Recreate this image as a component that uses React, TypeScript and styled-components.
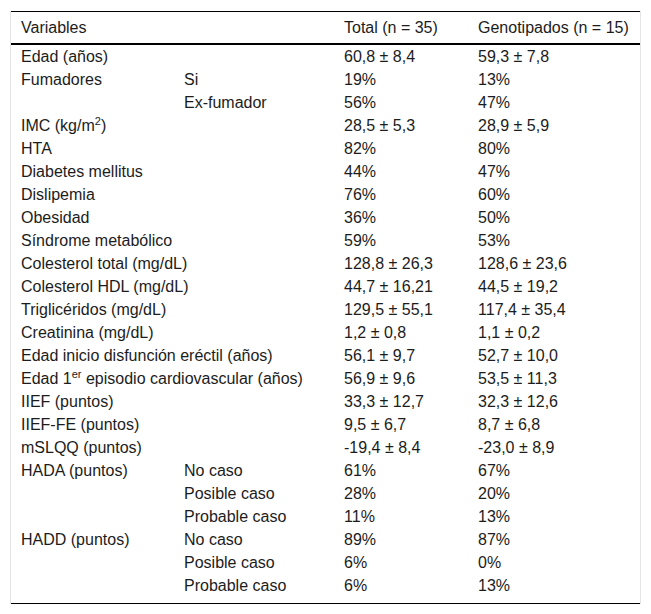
import React from 'react';
import styled, { createGlobalStyle } from 'styled-components';

const GlobalStyle = createGlobalStyle`
  body {
    margin: 0;
    background: #ffffff;
    font-family: "Liberation Sans", Arial, sans-serif;
  }
`;

const Frame = styled.div`
  margin: 11px 0 0 10px;
  width: 629px;
  border-left: 1px solid #e4e4e4;
  border-right: 1px solid #e4e4e4;
`;

const Table = styled.table`
  width: 100%;
  table-layout: fixed;
  border-collapse: collapse;
  font-family: "Liberation Sans", Arial, sans-serif;
  font-size: 16px;
  color: #1c1c1c;
  border-top: 1px solid #000;
  border-bottom: 1px solid #000;
`;

const HeadRow = styled.tr`
  border-bottom: 2px solid #000;
`;

const HeadCell = styled.th`
  text-align: left;
  font-weight: normal;
  height: 31px;
  padding: 0 0 0 10px;
  vertical-align: middle;
  white-space: nowrap;
`;

const Row = styled.tr<{ $last?: boolean }>`
  & > td {
    height: 23px;
    padding: 0 0 ${(p) => (p.$last ? '6px' : '0')} 10px;
    vertical-align: ${(p) => (p.$last ? 'top' : 'middle')};
    line-height: 23px;
    white-space: nowrap;
  }
`;

const Sup = styled.sup`
  font-size: 11px;
  line-height: 0;
  vertical-align: 6px;
`;

type Line = { label?: React.ReactNode; sub?: string; total: string; geno: string; span?: boolean };

const lines: Line[] = [
  { label: 'Edad (años)', total: '60,8 ± 8,4', geno: '59,3 ± 7,8', span: true },
  { label: 'Fumadores', sub: 'Si', total: '19%', geno: '13%' },
  { sub: 'Ex-fumador', total: '56%', geno: '47%' },
  { label: <>IMC (kg/m<Sup>2</Sup>)</>, total: '28,5 ± 5,3', geno: '28,9 ± 5,9', span: true },
  { label: 'HTA', total: '82%', geno: '80%', span: true },
  { label: 'Diabetes mellitus', total: '44%', geno: '47%', span: true },
  { label: 'Dislipemia', total: '76%', geno: '60%', span: true },
  { label: 'Obesidad', total: '36%', geno: '50%', span: true },
  { label: 'Síndrome metabólico', total: '59%', geno: '53%', span: true },
  { label: 'Colesterol total (mg/dL)', total: '128,8 ± 26,3', geno: '128,6 ± 23,6', span: true },
  { label: 'Colesterol HDL (mg/dL)', total: '44,7 ± 16,21', geno: '44,5 ± 19,2', span: true },
  { label: 'Triglicéridos (mg/dL)', total: '129,5 ± 55,1', geno: '117,4 ± 35,4', span: true },
  { label: 'Creatinina (mg/dL)', total: '1,2 ± 0,8', geno: '1,1 ± 0,2', span: true },
  { label: 'Edad inicio disfunción eréctil (años)', total: '56,1 ± 9,7', geno: '52,7 ± 10,0', span: true },
  { label: <>Edad 1<Sup>er</Sup> episodio cardiovascular (años)</>, total: '56,9 ± 9,6', geno: '53,5 ± 11,3', span: true },
  { label: 'IIEF (puntos)', total: '33,3 ± 12,7', geno: '32,3 ± 12,6', span: true },
  { label: 'IIEF-FE (puntos)', total: '9,5 ± 6,7', geno: '8,7 ± 6,8', span: true },
  { label: 'mSLQQ (puntos)', total: '-19,4 ± 8,4', geno: '-23,0 ± 8,9', span: true },
  { label: 'HADA (puntos)', sub: 'No caso', total: '61%', geno: '67%' },
  { sub: 'Posible caso', total: '28%', geno: '20%' },
  { sub: 'Probable caso', total: '11%', geno: '13%' },
  { label: 'HADD (puntos)', sub: 'No caso', total: '89%', geno: '87%' },
  { sub: 'Posible caso', total: '6%', geno: '0%' },
  { sub: 'Probable caso', total: '6%', geno: '13%' },
];

export default function App() {
  return (
    <>
      <GlobalStyle />
      <Frame>
        <Table>
          <colgroup>
            <col style={{ width: 163 }} />
            <col style={{ width: 160 }} />
            <col style={{ width: 134 }} />
            <col />
          </colgroup>
          <thead>
            <HeadRow>
              <HeadCell colSpan={2}>Variables</HeadCell>
              <HeadCell>Total (n = 35)</HeadCell>
              <HeadCell>Genotipados (n = 15)</HeadCell>
            </HeadRow>
          </thead>
          <tbody>
            {lines.map((l, i) => (
              <Row key={i} $last={i === lines.length - 1}>
                {l.span ? (
                  <td colSpan={2}>{l.label}</td>
                ) : (
                  <>
                    <td>{l.label}</td>
                    <td>{l.sub}</td>
                  </>
                )}
                <td>{l.total}</td>
                <td>{l.geno}</td>
              </Row>
            ))}
          </tbody>
        </Table>
      </Frame>
    </>
  );
}
